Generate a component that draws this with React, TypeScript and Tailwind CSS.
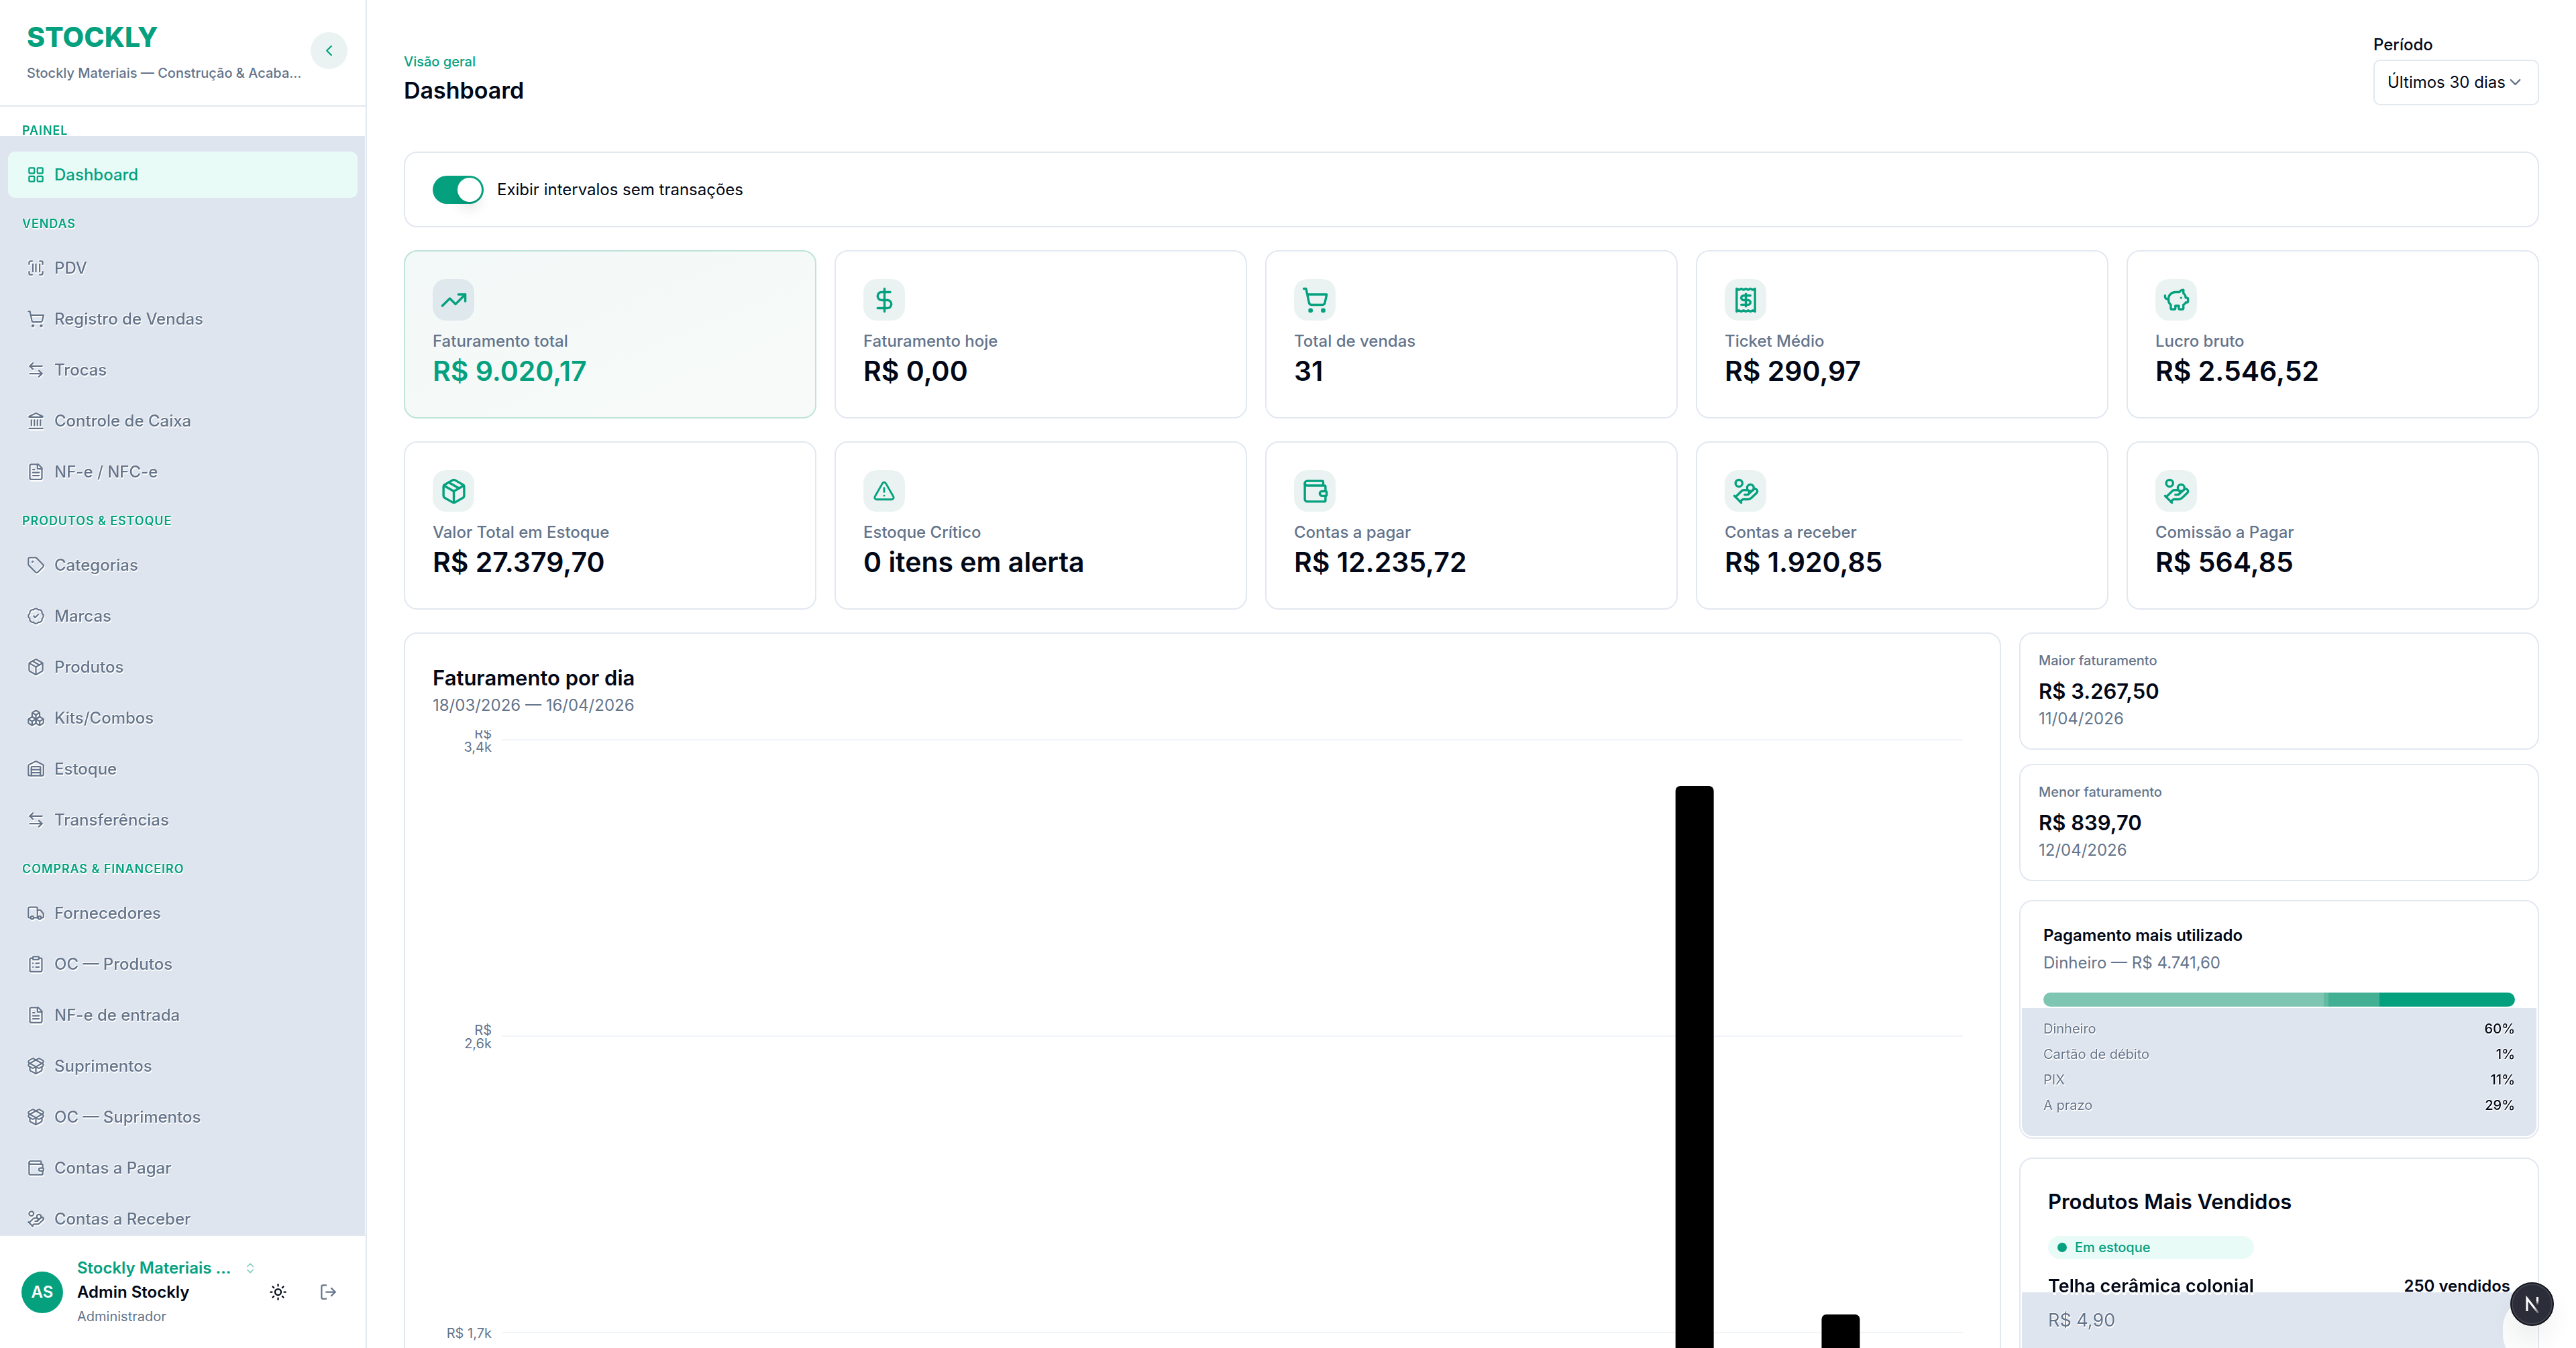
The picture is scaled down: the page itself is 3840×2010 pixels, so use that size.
import type { ReactNode } from 'react'
import {
  ArrowLeftRight, BadgeCheck, Boxes, ChevronDown, ChevronLeft, ChevronsUpDown, ClipboardList, DollarSign,
  FileText, HandCoins, Landmark, LayoutGrid, LogOut, Package, PackageOpen, PiggyBank, Receipt, ScanBarcode,
  ShoppingCart, Sun, Tag, TrendingUp, TriangleAlert, Truck, Wallet, Warehouse, type LucideIcon,
} from 'lucide-react'

type NavItem = { label: string; icon: LucideIcon; active?: boolean }
const SECTIONS: { title: string; items: NavItem[] }[] = [
  { title: 'Painel', items: [{ label: 'Dashboard', icon: LayoutGrid, active: true }] },
  {
    title: 'Vendas',
    items: [
      { label: 'PDV', icon: ScanBarcode },
      { label: 'Registro de Vendas', icon: ShoppingCart },
      { label: 'Trocas', icon: ArrowLeftRight },
      { label: 'Controle de Caixa', icon: Landmark },
      { label: 'NF-e / NFC-e', icon: FileText },
    ],
  },
  {
    title: 'Produtos & Estoque',
    items: [
      { label: 'Categorias', icon: Tag },
      { label: 'Marcas', icon: BadgeCheck },
      { label: 'Produtos', icon: Package },
      { label: 'Kits/Combos', icon: Boxes },
      { label: 'Estoque', icon: Warehouse },
      { label: 'Transferências', icon: ArrowLeftRight },
    ],
  },
  {
    title: 'Compras & Financeiro',
    items: [
      { label: 'Fornecedores', icon: Truck },
      { label: 'OC — Produtos', icon: ClipboardList },
      { label: 'NF-e de entrada', icon: FileText },
      { label: 'Suprimentos', icon: PackageOpen },
      { label: 'OC — Suprimentos', icon: PackageOpen },
      { label: 'Contas a Pagar', icon: Wallet },
      { label: 'Contas a Receber', icon: HandCoins },
    ],
  },
]

type Stat = { label: string; value: string; icon: LucideIcon; featured?: boolean; small?: boolean }
const STATS: Stat[] = [
  { label: 'Faturamento total', value: 'R$ 9.020,17', icon: TrendingUp, featured: true },
  { label: 'Faturamento hoje', value: 'R$ 0,00', icon: DollarSign },
  { label: 'Total de vendas', value: '31', icon: ShoppingCart },
  { label: 'Ticket Médio', value: 'R$ 290,97', icon: Receipt },
  { label: 'Lucro bruto', value: 'R$ 2.546,52', icon: PiggyBank },
  { label: 'Valor Total em Estoque', value: 'R$ 27.379,70', icon: Package },
  { label: 'Estoque Crítico', value: '0 itens em alerta', icon: TriangleAlert, small: true },
  { label: 'Contas a pagar', value: 'R$ 12.235,72', icon: Wallet },
  { label: 'Contas a receber', value: 'R$ 1.920,85', icon: HandCoins },
  { label: 'Comissão a Pagar', value: 'R$ 564,85', icon: HandCoins },
]

const PAYMENTS = [
  { label: 'Dinheiro', pct: 60, color: 'bg-[#7ec5b2]' },
  { label: 'Cartão de débito', pct: 1, color: 'bg-[#63baa4]' },
  { label: 'PIX', pct: 11, color: 'bg-[#43b094]' },
  { label: 'A prazo', pct: 29, color: 'bg-[#05a17f]' },
]

// chart geometry: one band per day, y in px from the top of the plot
const DAYS = 30
const PLOT_BOTTOM = 1782
const TICKS = [
  { y: 14, lines: ['R$', '3,4k'] },
  { y: 456, lines: ['R$', '2,6k'] },
  { y: 898, lines: ['R$ 1,7k'] },
  { y: 1340, lines: ['R$ 850'] },
  { y: 1782, lines: ['R$ 0'] },
]
const BARS = [
  { day: 24, y: 83 },
  { day: 27, y: 871 },
]

function Sidebar() {
  return (
    <aside className="flex w-[547px] shrink-0 flex-col border-r-2 border-[#e2e8f0] bg-white">
      <div className="flex h-[159px] shrink-0 items-start border-b-2 border-[#e2e8f0] pl-10 pr-[27px]">
        <div className="min-w-0 flex-1 pt-7">
          <div className="text-[41px] font-extrabold leading-[54px] text-[#05a17f]">STOCKLY</div>
          <div className="mt-3.5 truncate text-[20px] font-medium leading-[27px] text-[#64748b]">Stockly Materiais — Construção &amp; Acabamento</div>
        </div>
        <button aria-label="Recolher menu" className="mt-12 flex size-[55px] shrink-0 items-center justify-center rounded-full bg-[#ebf3f2] text-[#05a17f]">
          <ChevronLeft size={27} />
        </button>
      </div>

      <nav className="mr-px flex min-h-0 flex-1 flex-col gap-[25px] overflow-hidden bg-[linear-gradient(to_bottom,#fff_44px,#dfe5ee_44px)] pl-3 pr-[11px] pt-[22px]">
        {SECTIONS.map(s => (
          <div key={s.title}>
            <h2 className="mb-[18px] pl-[21px] text-[18px] font-semibold uppercase leading-[27px] tracking-wider text-[#05a17f] [filter:drop-shadow(1px_2px_0_#fff)_drop-shadow(-1px_-1px_0_#fff)]">{s.title}</h2>
            <ul className="flex flex-col gap-[7px]">
              {s.items.map(({ label, icon: Icon, active }) => (
                <li key={label}>
                  <a
                    href="#"
                    className={`flex h-[69px] items-center gap-3.5 rounded-[10px] px-7 text-[24px] font-medium leading-[34px] ${active ? 'bg-[#e8fbf7] text-[#05a17f]' : 'text-[#64748b] [filter:drop-shadow(1px_2px_0_#fff)_drop-shadow(-1px_-1px_0_#fff)]'}`}
                  >
                    <Icon size={27} />
                    {label}
                  </a>
                </li>
              ))}
            </ul>
          </div>
        ))}
      </nav>

      <div className="flex h-[169px] shrink-0 items-center border-t-2 border-[#e2e8f0] pl-8">
        <div className="flex size-[62px] shrink-0 items-center justify-center rounded-full bg-[#05a17f] text-[24px] font-semibold text-white">AS</div>
        <div className="ml-[21px] w-[268px]">
          <button className="flex w-full items-center justify-between text-[#05a17f]">
            <span className="w-[232px] truncate text-left text-[24px] font-semibold leading-[34px]">Stockly Materiais — Construção</span>
            <ChevronsUpDown size={20} className="opacity-50" />
          </button>
          <div className="mt-0.5 text-[24px] font-semibold leading-[34px] text-[#020817]">Admin Stockly</div>
          <div className="mt-0.5 text-[20px] leading-[34px] text-[#64748b]">Administrador</div>
        </div>
        <button aria-label="Tema claro" className="ml-[18px] text-[#020817]"><Sun size={27} /></button>
        <button aria-label="Sair" className="ml-12 text-[#64748b]"><LogOut size={27} /></button>
      </div>
    </aside>
  )
}

function StatCard({ label, value, icon: Icon, featured, small }: Stat) {
  return (
    <div className={`rounded-[20px] border-2 p-[41px] ${featured ? 'border-[#bfe3d9] bg-linear-to-br from-[#f3f9f8] to-[#f7faf9]' : 'border-[#e2e8f0] bg-white'}`}>
      <div className={`flex size-[62px] items-center justify-center rounded-[20px] text-[#05a17f] ${featured ? 'bg-[#dfe8ed]' : 'bg-[#ebf3f2]'}`}>
        <Icon size={small ? 34 : 41} />
      </div>
      <div className="mt-3.5 text-[24px] font-medium leading-[34px] text-[#64748b]">{label}</div>
      <div className={`text-[41px] font-semibold leading-[55px] ${featured ? 'text-[#05a17f]' : 'text-[#020817]'}`}>{value}</div>
    </div>
  )
}

function RevenueChart() {
  return (
    <div className="flex">
      <svg className="h-[1830px] w-[103px] shrink-0" fill="#64748b" fontSize="20" textAnchor="end">
        {TICKS.map(t => t.lines.map((line, i) => (
          <text key={t.y + line} x="88" y={t.y + 8 + (i * 2 - (t.lines.length - 1)) * 10}>{line}</text>
        )))}
      </svg>
      <svg className="mr-3.5 h-[1830px] min-w-0 flex-1">
        {TICKS.map(t => (
          <line key={t.y} x1="0" x2="100%" y1={t.y} y2={t.y} stroke="#f1f4f8" strokeWidth="2" />
        ))}
        {BARS.map(b => (
          <rect key={b.day} x={`${((b.day + 0.1) / DAYS) * 100}%`} y={b.y} width={`${78.5 / DAYS}%`} height={PLOT_BOTTOM - b.y} rx="7" fill="#000" />
        ))}
      </svg>
    </div>
  )
}

function Highlight({ label, value, date }: { label: string; value: string; date: string }) {
  return (
    <div className="rounded-[20px] border-2 border-[#e2e8f0] bg-white p-[27px]">
      <div className="text-[20px] font-medium leading-[27px] text-[#64748b]">{label}</div>
      <div className="mt-2 text-[31px] font-semibold leading-[48px] text-[#020817]">{value}</div>
      <div className="text-[24px] leading-[34px] text-[#64748b]">{date}</div>
    </div>
  )
}

function Payments() {
  return (
    <div className="rounded-[20px] border-2 border-[#e2e8f0] bg-white p-0.5">
      <div className="px-8 pt-8">
        <h3 className="text-[24px] font-semibold leading-[34px] text-[#020817]">Pagamento mais utilizado</h3>
        <p className="mt-[7px] text-[24px] leading-[34px] text-[#64748b]">Dinheiro — R$ 4.741,60</p>
        <div className="mt-[27px] flex h-[21px] overflow-hidden rounded-full">
          {PAYMENTS.map(p => <div key={p.label} className={p.color} style={{ width: `${p.pct}%` }} />)}
        </div>
      </div>
      <ul className="mt-0.5 flex flex-col gap-[11px] rounded-b-[16px] bg-[#dfe5ee] px-8 pb-8 pt-[18px]">
        {PAYMENTS.map(p => (
          <li key={p.label} className="flex justify-between text-[20px] leading-[27px] [filter:drop-shadow(1px_2px_0_#fff)_drop-shadow(-1px_-1px_0_#fff)]">
            <span className="text-[#64748b]">{p.label}</span>
            <span className="font-medium text-[#020817]">{p.pct}%</span>
          </li>
        ))}
      </ul>
    </div>
  )
}

function TopProducts() {
  return (
    <div className="rounded-[20px] border-2 border-[#e2e8f0] bg-white p-0.5">
      <h3 className="px-[39px] pt-[38px] text-[31px] font-semibold leading-[48px] text-[#020817]">Produtos Mais Vendidos</h3>
      <div className="relative mt-[27px] bg-[linear-gradient(to_bottom,#fff_84px,#dfe5ee_84px)] px-[39px] pb-20">
        <div className="absolute right-0 top-[88px] h-[108px] w-[50px] rounded-l-full bg-[#fbfdfd]" />
        <div className="flex items-end justify-between">
          <div>
            <div className="flex h-[34px] items-center gap-3 rounded-full bg-[#e8fbf7] px-3.5 text-[20px] font-medium text-[#05a17f]">
              <span className="size-3.5 rounded-full bg-[#05a17f]" />
              Em estoque
            </div>
            <div className="mt-5 text-[27px] font-semibold leading-[41px] text-[#020817] [filter:drop-shadow(1px_2px_0_#fff)_drop-shadow(0_2px_0_#fff)]">Telha cerâmica colonial</div>
          </div>
          <div className="text-[24px] font-semibold leading-[41px] text-[#020817]">250 vendidos</div>
        </div>
        <div className="mt-2.5 text-[27px] leading-[41px] text-[#64748b] [filter:drop-shadow(1px_2px_0_#fff)_drop-shadow(-1px_-1px_0_#fff)]">R$ 4,90</div>
      </div>
    </div>
  )
}

function Card({ children }: { children: ReactNode }) {
  return <section className="rounded-[20px] border-2 border-[#e2e8f0] bg-white px-[41px]">{children}</section>
}

export default function App() {
  return (
    <div className="flex h-screen overflow-hidden bg-white font-[Inter,sans-serif] text-[#020817]">
      <Sidebar />
      <main className="flex min-w-0 flex-1 flex-col gap-[34px] overflow-hidden px-[55px] pt-[50px]">
        <header className="flex h-[142px] shrink-0 items-start justify-between">
          <div className="pt-[29px]">
            <p className="text-[20px] font-medium leading-[27px] text-[#05a17f]">Visão geral</p>
            <h1 className="mt-[5px] text-[34px] font-semibold leading-[48px]">Dashboard</h1>
          </div>
          <div className="flex w-[247px] flex-col gap-[5px]">
            <label htmlFor="periodo" className="text-[24px] font-medium leading-[34px]">Período</label>
            <div className="relative">
              <select id="periodo" className="h-[68px] w-full appearance-none rounded-[10px] border-2 border-[#e2e8f0] bg-white pl-[19px] text-[24px]">
                <option>Últimos 30 dias</option>
              </select>
              <ChevronDown size={27} className="pointer-events-none absolute right-[22px] top-5 text-[#64748b]" />
            </div>
          </div>
        </header>

        <Card>
          <label className="flex h-[109px] items-center gap-5 text-[24px]">
            <input type="checkbox" defaultChecked className="peer sr-only" />
            <span className="flex h-[42px] w-[76px] items-center justify-end rounded-full bg-[#05a17f] pr-[3px]">
              <span className="size-9 rounded-full bg-white shadow-[0_14px_20px_-4px_rgba(0,0,0,0.12)]" />
            </span>
            Exibir intervalos sem transações
          </label>
        </Card>

        <div className="grid shrink-0 grid-cols-5 gap-x-[27px] gap-y-[34px]">
          {STATS.map(s => <StatCard key={s.label} {...s} />)}
        </div>

        <div className="grid shrink-0 grid-cols-[minmax(0,1fr)_775px] items-start gap-[27px]">
          <Card>
            <h2 className="pt-[42px] text-[31px] font-semibold leading-[48px]">Faturamento por dia</h2>
            <p className="mb-5 text-[24px] leading-[34px] text-[#64748b]">18/03/2026 — 16/04/2026</p>
            <RevenueChart />
          </Card>
          <div className="flex flex-col gap-7">
            <div className="flex flex-col gap-[21px]">
              <Highlight label="Maior faturamento" value="R$ 3.267,50" date="11/04/2026" />
              <Highlight label="Menor faturamento" value="R$ 839,70" date="12/04/2026" />
            </div>
            <Payments />
            <TopProducts />
          </div>
        </div>
      </main>

      <button aria-label="Next.js" className="fixed bottom-[33px] right-[33px] flex size-[65px] items-center justify-center rounded-full border-2 border-[#14151c] bg-[#2b2d38] shadow-[inset_0_0_0_2px_#41434e,0_20px_36px_rgba(0,0,0,0.06)]">
        <svg width="26" height="26" viewBox="0 0 26 26" fill="none" strokeWidth="3">
          <defs>
            <linearGradient id="fade" x1="0" y1="0" x2="0" y2="1">
              <stop offset="0.4" stopColor="#fff" />
              <stop offset="1" stopColor="#fff" stopOpacity="0" />
            </linearGradient>
            <linearGradient id="diagonal" x1="0" y1="0" x2="1" y2="1">
              <stop offset="0.6" stopColor="#fff" />
              <stop offset="1" stopColor="#fff" stopOpacity="0.2" />
            </linearGradient>
          </defs>
          <path d="M5 23V4L22 26" stroke="url(#diagonal)" />
          <path d="M20 3h1v11h-1z" stroke="url(#fade)" strokeWidth="2" />
        </svg>
      </button>
    </div>
  )
}
